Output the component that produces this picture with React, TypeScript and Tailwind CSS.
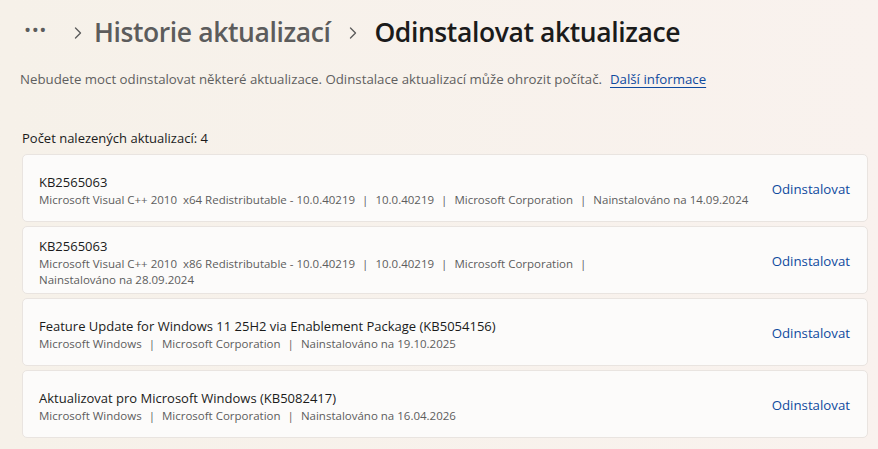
import { ChevronRight } from "lucide-react";

type Update = {
  title: string;
  details: string[][];
};

// Each inner array is one line of the detail text, pieces separated by a pipe
const UPDATES: Update[] = [
  {
    title: "KB2565063",
    details: [
      [
        "Microsoft Visual C++ 2010\u00a0\u00a0x64 Redistributable - 10.0.40219",
        "10.0.40219",
        "Microsoft Corporation",
        "Nainstalováno na 14.09.2024",
      ],
    ],
  },
  {
    title: "KB2565063",
    details: [
      [
        "Microsoft Visual C++ 2010\u00a0\u00a0x86 Redistributable - 10.0.40219",
        "10.0.40219",
        "Microsoft Corporation",
        "",
      ],
      ["Nainstalováno na 28.09.2024"],
    ],
  },
  {
    title: "Feature Update for Windows 11 25H2 via Enablement Package (KB5054156)",
    details: [["Microsoft Windows", "Microsoft Corporation", "Nainstalováno na 19.10.2025"]],
  },
  {
    title: "Aktualizovat pro Microsoft Windows (KB5082417)",
    details: [["Microsoft Windows", "Microsoft Corporation", "Nainstalováno na 16.04.2026"]],
  },
];

const DetailLine = ({ parts }: { parts: string[] }) => (
  <div className="flex items-center whitespace-nowrap">
    {parts.map((p, i) => (
      <span key={i} className="flex items-center">
        {i > 0 && <span className="mx-[7px]">|</span>}
        {p}
      </span>
    ))}
  </div>
);

export default function App() {
  return (
    <div
      className="w-[878px] h-[449px] overflow-hidden bg-gradient-to-r from-[#f6f1e9] to-[#f9f2ee] text-[#1b1b1b]"
      style={{ fontFamily: '"Open Sans", "Noto Sans", sans-serif' }}
    >
      {/* Breadcrumb header */}
      <div className="flex items-center h-[40px] mt-[13px] pl-[24px]">
        <span className="text-[#5c5c5c] text-[19px] leading-none tracking-[0.5px] -mt-[6px]">
          •••
        </span>
        <ChevronRight size={20} strokeWidth={1.6} className="text-[#5c5c5c] ml-[21px] mr-[6px]" />
        <span className="text-[26.5px] font-semibold text-[#5c5c5c] tracking-[-0.4px]">
          Historie aktualizací
        </span>
        <ChevronRight size={20} strokeWidth={1.6} className="text-[#5c5c5c] ml-[13px] mr-[11px]" />
        <span className="text-[26.5px] font-semibold text-[#1b1b1b] tracking-[-0.4px]">
          Odinstalovat aktualizace
        </span>
      </div>

      {/* Description */}
      <div className="pl-[20px] mt-[16px] text-[13.25px] text-[#5f5f5f] leading-[20px]">
        Nebudete moct odinstalovat některé aktualizace. Odinstalace aktualizací může ohrozit počítač.
        <a className="ml-[8px] text-[#0f4a9e] underline underline-offset-[3px]">Další informace</a>
      </div>

      {/* Count */}
      <div className="pl-[22px] mt-[39px] text-[13px] leading-[20px]">
        Počet nalezených aktualizací: 4
      </div>

      {/* Update list */}
      <div className="flex flex-col gap-[4px] mt-[6px] ml-[22px] w-[846px]">
        {UPDATES.map((u, i) => (
          <div
            key={i}
            className="flex items-center h-[68px] pl-[16px] pr-[17px] pt-[4px] rounded-[5px] border border-[#e9e4e0] bg-[#fcfbfa]"
          >
            <div className="flex-1 min-w-0">
              <div className="text-[13px] leading-[19px] text-[#1b1b1b]">{u.title}</div>
              <div className="text-[11.5px] leading-[16px] text-[#5d5d5d]">
                {u.details.map((line, j) => (
                  <DetailLine key={j} parts={line} />
                ))}
              </div>
            </div>
            <button className="text-[13.25px] text-[#0f4a9e] ml-4 -mt-[1px]">Odinstalovat</button>
          </div>
        ))}
      </div>
    </div>
  );
}
